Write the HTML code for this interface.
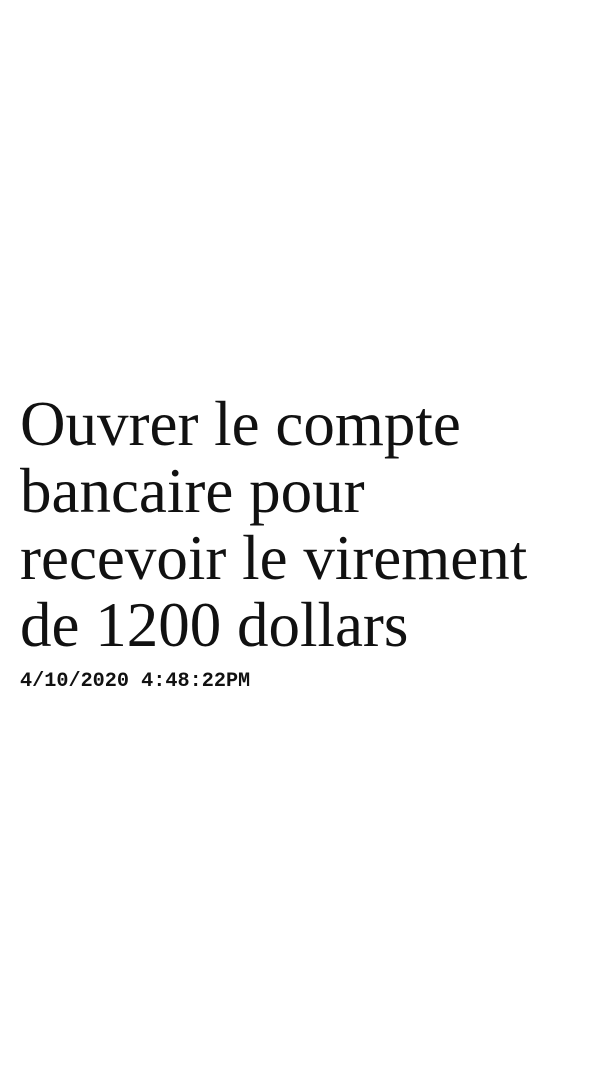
<!DOCTYPE html>
<html><head><meta charset="utf-8"><style>
html,body{margin:0;padding:0;background:#fff;width:608px;height:1080px;overflow:hidden}
h1{position:absolute;left:20px;top:391px;margin:0;font-family:"Liberation Serif",serif;font-weight:normal;font-size:63px;line-height:67px;color:#111;width:590px;white-space:nowrap}
.d{position:absolute;left:20px;top:671px;font-family:"Liberation Mono",monospace;font-weight:bold;font-size:20.2px;line-height:22px;color:#111}
</style></head><body>
<h1>Ouvrer le compte<br>bancaire pour<br>recevoir le virement<br>de 1200 dollars</h1>
<div class="d">4/10/2020 4:48:22PM</div>
</body></html>
